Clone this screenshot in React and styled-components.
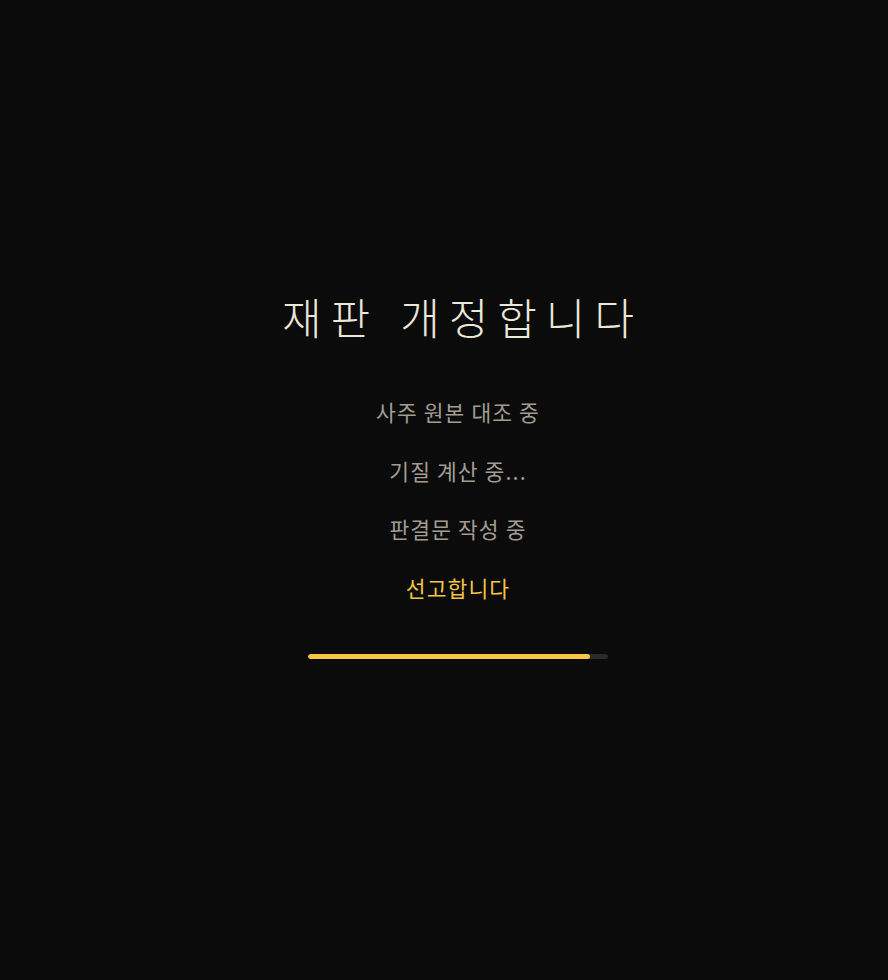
import React from "react"
import styled, { createGlobalStyle } from "styled-components"

const steps = [
	{ text: "사주 원본 대조 중", active: false },
	{ text: "기질 계산 중...", active: false },
	{ text: "판결문 작성 중", active: false },
	{ text: "선고합니다", active: true },
]

export default function App() {
	return (
		<>
			<GlobalStyle />
			<Screen>
				<Title>
					<Word>재판</Word>
					<Word>개정합니다</Word>
				</Title>
				<Steps>
					{steps.map((s) => (
						<Step key={s.text} $active={s.active}>
							{s.text}
						</Step>
					))}
				</Steps>
				<Track>
					<Fill style={{ width: "94%" }} />
				</Track>
			</Screen>
		</>
	)
}

const GlobalStyle = createGlobalStyle`
	html, body {
		margin: 0;
		padding: 0;
		background: #0b0b0b;
	}
	body {
		font-family: "Noto Sans CJK KR", "Noto Sans", sans-serif;
	}
`
const Screen = styled.div`
	min-height: 980px;
	box-sizing: border-box;
	display: flex;
	flex-direction: column;
	align-items: center;
	padding: 286px 0 0 28px;
	background: #0b0b0b;
`
const Title = styled.h1`
	display: flex;
	gap: 30px;
	margin: 0;
	font-size: 43px;
	font-weight: 300;
	line-height: 60px;
	color: #ece7d8;
`
const Word = styled.span`
	letter-spacing: 9px;
	margin-right: -9px;
`
const Steps = styled.div`
	display: flex;
	flex-direction: column;
	align-items: center;
	gap: 29.5px;
	margin-top: 51px;
`
const Step = styled.div`
	font-size: 21.5px;
	line-height: 29px;
	font-weight: 400;
	letter-spacing: 1.1px;
	color: ${(p) => (p.$active ? "#f4c542" : "#a29d92")};
`
const Track = styled.div`
	width: 300px;
	height: 5px;
	margin-top: 52px;
	border-radius: 3px;
	background: #2a2a27;
	overflow: hidden;
`
const Fill = styled.div`
	height: 100%;
	border-radius: 3px;
	background: #f6c643;
`
